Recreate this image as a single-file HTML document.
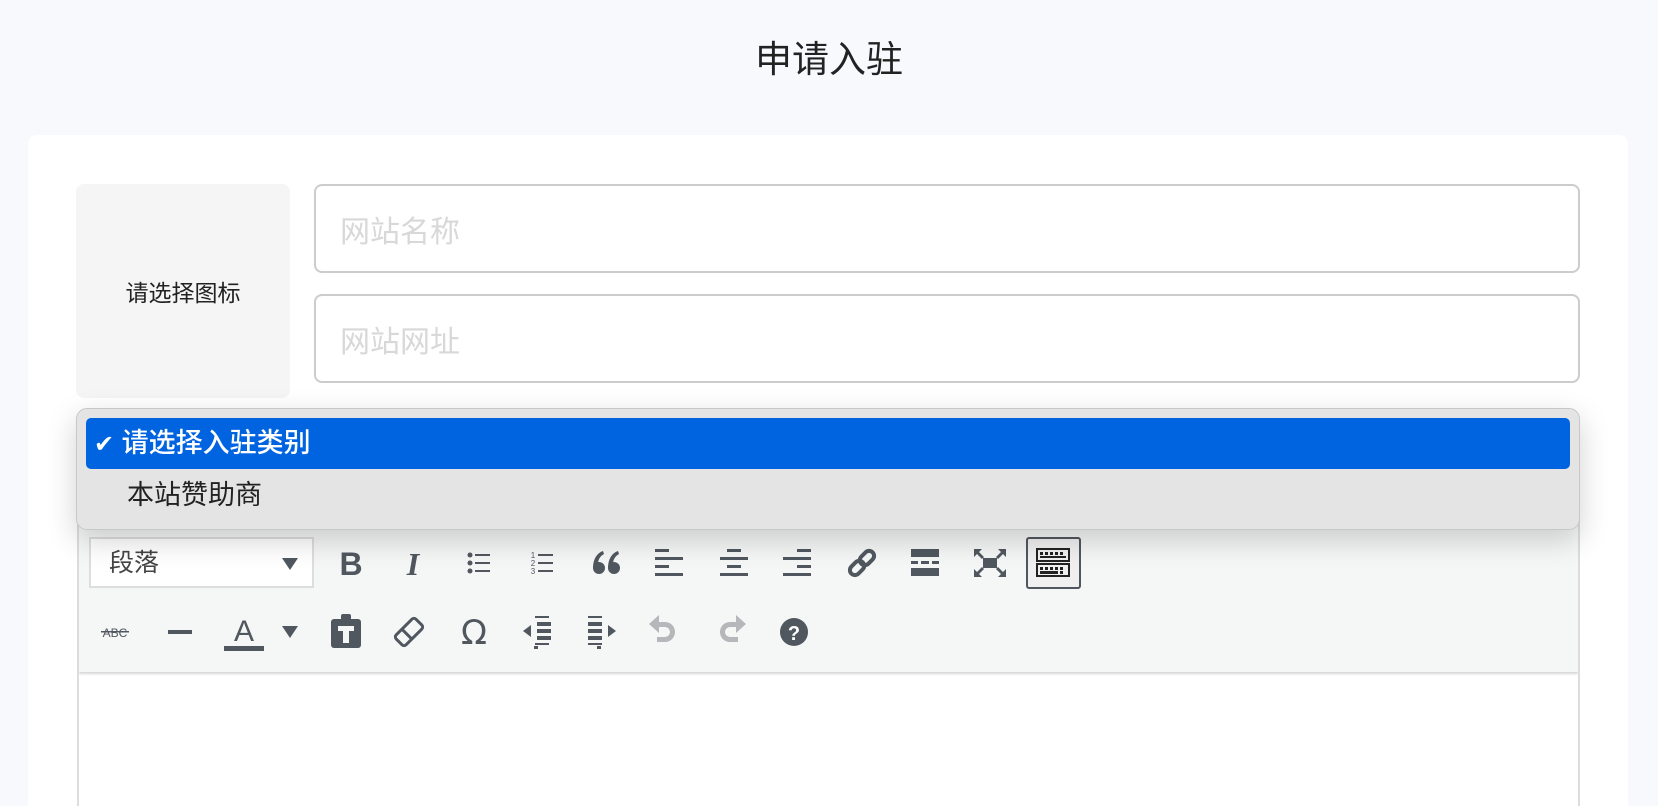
<!DOCTYPE html>
<html><head><meta charset="utf-8"><style>
*{margin:0;padding:0;box-sizing:border-box}
html{width:1658px;height:806px;overflow:hidden}
body{width:1658px;height:806px;background:#f8f9fd;font-family:"Liberation Sans","Noto Sans CJK SC",sans-serif;position:relative;overflow:hidden}
.abs{position:absolute}
.t{left:0;width:1658px;top:37px;text-align:center;font-size:37px;color:#222;line-height:46px}
.card{left:28px;top:135px;width:1600px;height:671px;background:#fff;border-radius:9px 9px 0 0}
.icon{left:76px;top:184px;width:214px;height:214px;background:#f5f5f5;border-radius:8px;display:flex;align-items:center;justify-content:center;font-size:23px;color:#222}
.inp{left:314px;width:1266px;height:89px;border:2px solid #ccc;border-radius:8px;padding-left:24px;font-size:30px;color:#d8d8d8;display:flex;align-items:center}
.ed{left:77px;top:500px;width:1503px;height:306px;border:2px solid #ddd;border-bottom:none;background:#fff}
.tb{left:79px;top:500px;width:1499px;height:172px;background:#f5f6f6;box-shadow:0 2px 2px #d8d8d8}
.fmt{left:89px;top:537px;width:225px;height:51px;border:2px solid #ddd;background:#fff;font-size:25px;color:#444;padding-left:18px;line-height:49px}
.fmt:after{content:"";position:absolute;right:14px;top:19px;border-left:8px solid transparent;border-right:8px solid transparent;border-top:12px solid #50575e}
.kbd{left:1026px;top:537px;width:55px;height:52px;border:2px solid #50575e;border-radius:3px;background:#f0f0f1}
.dd{left:76px;top:408px;width:1504px;height:122px;background:#e4e4e4;border:1px solid #c8c8c8;border-radius:11px;box-shadow:0 10px 30px rgba(0,0,0,.18)}
.hl{left:86px;top:418px;width:1484px;height:51px;background:#0064e1;border-radius:5px;color:#fff;font-size:27px;line-height:51px;padding-left:8px;font-weight:500}
.it2{left:127px;top:476px;font-size:27px;color:#222;line-height:38px}
</style></head><body>
<div class="abs t">申请入驻</div>
<div class="abs card"></div>
<div class="abs icon">请选择图标</div>
<div class="abs inp" style="top:184px">网站名称</div>
<div class="abs inp" style="top:294px">网站网址</div>
<div class="abs ed"></div>
<div class="abs tb"></div>
<div class="abs fmt">段落</div>
<div class="abs kbd"></div>
<svg class="abs" style="left:0;top:0" width="1658" height="806" fill="#50575e" stroke="none">
<text x="351" y="575" font-size="32" font-weight="bold" text-anchor="middle" font-family="Liberation Sans">B</text>
<text x="413" y="575" font-size="32" font-style="italic" font-weight="bold" text-anchor="middle" font-family="Liberation Serif">I</text>
<g transform="translate(479,563)"><circle cx="-9" cy="-8" r="2.5"/><circle cx="-9" cy="0" r="2.5"/><circle cx="-9" cy="8" r="2.5"/><rect x="-4" y="-9" width="15" height="2"/><rect x="-4" y="-1" width="15" height="2"/><rect x="-4" y="7" width="15" height="2"/></g>
<g transform="translate(542,563)"><text x="-9" y="-5" font-size="8" text-anchor="middle">1</text><text x="-9" y="3" font-size="8" text-anchor="middle">2</text><text x="-9" y="11" font-size="8" text-anchor="middle">3</text><rect x="-4" y="-9" width="15" height="2"/><rect x="-4" y="-1" width="15" height="2"/><rect x="-4" y="7" width="15" height="2"/></g>
<g transform="translate(606,563)"><circle cx="-7" cy="5" r="6"/><path d="M-13 5c0-9 4-15 10-17l1 3c-4 2-6 6-6 10z"/><circle cx="8" cy="5" r="6"/><path d="M2 5c0-9 4-15 10-17l1 3c-4 2-6 6-6 10z"/></g>
<g transform="translate(669,563)"><rect x="-14" y="-14" width="14" height="3"/><rect x="-14" y="-6" width="28" height="3"/><rect x="-14" y="2" width="14" height="3"/><rect x="-14" y="10" width="28" height="3"/></g>
<g transform="translate(734,563)"><rect x="-7" y="-14" width="14" height="3"/><rect x="-14" y="-6" width="28" height="3"/><rect x="-7" y="2" width="14" height="3"/><rect x="-14" y="10" width="28" height="3"/></g>
<g transform="translate(797,563)"><rect x="0" y="-14" width="14" height="3"/><rect x="-14" y="-6" width="28" height="3"/><rect x="0" y="2" width="14" height="3"/><rect x="-14" y="10" width="28" height="3"/></g>
<g transform="translate(862,563) rotate(-45)" fill="none" stroke="#50575e" stroke-width="4"><rect x="-15" y="-5" width="16" height="10" rx="5"/><rect x="-1" y="-5" width="16" height="10" rx="5"/></g>
<g transform="translate(925,563)"><rect x="-14" y="-14" width="28" height="8"/><rect x="-14" y="-2" width="7" height="3"/><rect x="-4" y="-2" width="8" height="3"/><rect x="7" y="-2" width="7" height="3"/><rect x="-14" y="5" width="28" height="8"/></g>
<g transform="translate(990,563)"><rect x="-7" y="-5" width="14" height="10"/><path d="M-16-14h8l-3 3 5 5-2 2-5-5-3 3zM16-14v8l-3-3-5 5-2-2 5-5-3-3zM-16 14v-8l3 3 5-5 2 2-5 5 3 3zM16 14h-8l3-3-5-5 2-2 5 5 3-3z"/></g>
<g transform="translate(1053,563)" fill="none" stroke="#222" stroke-width="2"><rect x="-16" y="-14" width="32" height="12"/><rect x="-16" y="1" width="32" height="12"/></g>
<g transform="translate(1053,563)" fill="#222"><rect x="-13" y="-11" width="3" height="3"/><rect x="-8" y="-11" width="3" height="3"/><rect x="-3" y="-11" width="3" height="3"/><rect x="2" y="-11" width="3" height="3"/><rect x="7" y="-11" width="3" height="3"/><rect x="-13" y="-7" width="26" height="2"/><rect x="-13" y="4" width="3" height="3"/><rect x="-8" y="4" width="3" height="3"/><rect x="-3" y="4" width="3" height="3"/><rect x="2" y="4" width="3" height="3"/><rect x="7" y="4" width="3" height="3"/><rect x="-13" y="8" width="18" height="3"/><rect x="7" y="8" width="3" height="3"/></g>
<text x="115" y="637" font-size="12" text-anchor="middle">ABC</text><rect x="101" y="631" width="28" height="1.5"/>
<rect x="168" y="630" width="24" height="4"/>
<text x="244" y="641" font-size="30" text-anchor="middle" font-family="Liberation Sans">A</text><rect x="224" y="646" width="40" height="5"/>
<path d="M282 626h16l-8 12z"/>
<g transform="translate(346,632)"><rect x="-15" y="-13" width="30" height="29" rx="3"/><rect x="-5" y="-18" width="10" height="7" rx="2"/><path d="M-8-6h16v5h-5v12h-6v-12h-5z" fill="#f5f6f6"/></g>
<g transform="translate(409,632) rotate(-45)" fill="none" stroke="#50575e" stroke-width="3"><rect x="-14" y="-7" width="28" height="14" rx="3"/><path d="M-3-7v14"/></g>
<text x="474" y="644" font-size="34" text-anchor="middle" font-family="DejaVu Sans">Ω</text>
<g transform="translate(537,632)"><rect x="-2" y="-16" width="14" height="2"/><rect x="0" y="-10" width="14" height="4"/><rect x="0" y="-3" width="14" height="4"/><rect x="0" y="4" width="14" height="4"/><rect x="-2" y="11" width="14" height="2"/><rect x="-3" y="14" width="4" height="3"/><path d="M-14-1l8-6v12z"/></g>
<g transform="translate(602,632)"><rect x="-14" y="-16" width="14" height="2"/><rect x="-14" y="-10" width="14" height="4"/><rect x="-14" y="-3" width="14" height="4"/><rect x="-14" y="4" width="14" height="4"/><rect x="-14" y="11" width="14" height="2"/><rect x="-5" y="14" width="4" height="3"/><path d="M14-1l-8-6v12z"/></g>
<g transform="translate(665,632)" fill="#b5b7ba"><path d="M-16-8l10-9v18z"/><path d="M-8-10h8a10 10 0 0 1 0 20h-8v-5h8a5 5 0 0 0 0-10h-8z"/></g>
<g transform="translate(730,632) scale(-1,1)" fill="#b5b7ba"><path d="M-16-8l10-9v18z"/><path d="M-8-10h8a10 10 0 0 1 0 20h-8v-5h8a5 5 0 0 0 0-10h-8z"/></g>
<circle cx="794" cy="632" r="14"/><text x="794" y="640" font-size="20" font-weight="bold" fill="#fff" text-anchor="middle">?</text>
</svg>
<div class="abs dd"></div>
<div class="abs hl"><b style="font-family:'DejaVu Sans';font-size:24px">✔</b> 请选择入驻类别</div>
<div class="abs it2">本站赞助商</div>
</body></html>
